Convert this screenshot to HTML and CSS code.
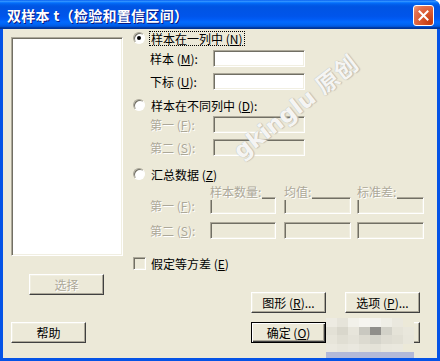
FILE: index.html
```html
<!DOCTYPE html>
<html>
<head>
    <meta charset="utf-8">
    <title>双样本 t（检验和置信区间）</title>
    <link rel="stylesheet" href="styles.css">
</head>
<body>

<div class="window">
    <!-- title bar -->
    <div class="titlebar">
        <span class="title">双样本 t（检验和置信区间）</span>
        <span class="close-btn">
            <svg width="13" height="13" viewBox="0 0 13 13"><path d="M2.5 2.5 L10.5 10.5 M10.5 2.5 L2.5 10.5" stroke="#fff" stroke-width="2" stroke-linecap="square"/></svg>
        </span>
    </div>

    <div class="client">
        <!-- left column: column list -->
        <div class="col-left">
            <div class="listbox"></div>
            <div class="btn btn-select disabled">选择</div>
            <div class="btn btn-help">帮助</div>
        </div>

        <!-- right column: options -->
        <div class="col-right">
            <div class="option-row r-one">
                <span class="radio checked"></span>
                <span class="option-text focus">样本在一列中 (<u>N</u>)</span>
            </div>
            <div class="field-row r-sample">
                <span class="field-label">样本 (<u>M</u>):</span>
                <span class="edit"></span>
            </div>
            <div class="field-row r-index">
                <span class="field-label">下标 (<u>U</u>):</span>
                <span class="edit"></span>
            </div>

            <div class="option-row r-two">
                <span class="radio"></span>
                <span class="option-text">样本在不同列中 (<u>D</u>):</span>
            </div>
            <div class="field-row r-first">
                <span class="field-label disabled">第一 (<u>F</u>):</span>
                <span class="edit off"></span>
            </div>
            <div class="field-row r-second">
                <span class="field-label disabled">第二 (<u>S</u>):</span>
                <span class="edit off"></span>
            </div>

            <div class="option-row r-three">
                <span class="radio"></span>
                <span class="option-text">汇总数据 (<u>Z</u>)</span>
            </div>
            <div class="sum-head">
                <span class="cell w66"><span class="head-text disabled">样本数量:</span></span>
                <span class="cell w67 gap8"><span class="head-text disabled">均值:</span></span>
                <span class="cell w67 gap6"><span class="head-text disabled">标准差:</span></span>
            </div>
            <div class="sum-row">
                <span class="sum-label disabled">第一 (<u>F</u>):</span>
                <span class="edit off w66"></span>
                <span class="edit off w67 gap8"></span>
                <span class="edit off w67 gap6"></span>
            </div>
            <div class="sum-row r-sum2">
                <span class="sum-label disabled">第二 (<u>S</u>):</span>
                <span class="edit off w66"></span>
                <span class="edit off w67 gap8"></span>
                <span class="edit off w67 gap6"></span>
            </div>

            <div class="option-row r-check">
                <span class="checkbox"></span>
                <span class="option-text">假定等方差 (<u>E</u>)</span>
            </div>

            <div class="btn-row r-btn1">
                <div class="btn">图形 (<u>R</u>)...</div>
                <div class="btn">选项 (<u>P</u>)...</div>
            </div>
            <div class="btn-row r-btn2">
                <div class="btn default">确定 (<u>O</u>)</div>
                <div class="btn">取消</div>
            </div>
        </div>
    </div>

    <!-- watermark and blurred patch over the dialog -->
    <div class="watermark">gkinglu 原创</div>
    <div class="mosaic">
        <span style="background:#EDEBE2"></span><span style="background:#E6E4DA"></span><span style="background:#F2F1EA"></span><span style="background:#F6F5F0"></span><span style="background:#F4F3EE"></span><span style="background:#EFEEE6"></span><span style="background:#EAE8DE"></span><span style="background:#ECE9D8"></span>
        <span style="background:#E3E1D6"></span><span style="background:#D9D7CC"></span><span style="background:#E7E5DB"></span><span style="background:#C9C8C0"></span><span style="background:#8F8E8A"></span><span style="background:#D2D1C8"></span><span style="background:#E5E3D8"></span><span style="background:#E9E7DC"></span>
        <span style="background:#E7E5DA"></span><span style="background:#E0DED3"></span><span style="background:#E4E2D8"></span><span style="background:#DCDAD0"></span><span style="background:#D5D4CB"></span><span style="background:#DEDCD2"></span><span style="background:#E1DFD4"></span><span style="background:#E8E6DB"></span>
        <span style="background:#EBE9DF"></span><span style="background:#E8E6DC"></span><span style="background:#EAE8DF"></span><span style="background:#E6E4DA"></span><span style="background:#E4E2D8"></span><span style="background:#E9E7DD"></span><span style="background:#EAE8DE"></span><span style="background:#ECE9D8"></span>
    </div>
    <div class="mosaic-strip"></div>
</div>

</body>
</html>
```

FILE: styles.css
```css
/* page */
html, body {
    margin: 0;
    height: 100%;
    background: #ffffff;
}

body {
    font-family: "Noto Sans CJK SC", "DejaVu Sans", sans-serif;
    font-size: 12px;
    color: #000000;
}

u {
    text-decoration: underline;
}

/* window frame */
.window {
    position: relative;
    width: 440px;
    height: 361px;
    display: flex;
    flex-direction: column;
    background: #0553E6;
    border-radius: 0 7px 0 0;
    overflow: hidden;
}

.titlebar {
    height: 29px;
    flex: none;
    display: flex;
    align-items: center;
    padding: 0 6px 0 7px;
    background: linear-gradient(to bottom, #0058EE 0%, #3593FF 4%, #288EFF 6%, #127DFF 8%, #036FFC 10%, #0262EE 14%, #0057E5 20%, #0054E3 24%, #0055EB 56%, #005BF5 66%, #026AFE 76%, #0062EF 86%, #0052D6 92%, #0040AB 94%, #003092 100%);
}

.title {
    flex: 1;
    color: #ffffff;
    font-weight: bold;
    font-size: 14px;
    letter-spacing: 0.3px;
    text-shadow: 1px 1px #0A1883;
    white-space: nowrap;
}

.close-btn {
    width: 19px;
    height: 19px;
    margin-top: 1px;
    border: 1px solid #ffffff;
    border-radius: 3px;
    display: flex;
    align-items: center;
    justify-content: center;
    background: radial-gradient(circle at 85% 85%, #C43A0E 0%, #DA5A30 45%, #E47050 75%, #F0A080 100%);
}

.client {
    flex: 1;
    margin: 0 3px 3px;
    background: #ECE9D8;
    display: flex;
}

/* left column */
.col-left {
    width: 130px;
    flex: none;
    padding: 8px 0 0 8px;
    box-sizing: border-box;
}

.listbox {
    width: 112px;
    height: 219px;
    box-sizing: border-box;
    background: #ffffff;
    border: 1px solid;
    border-color: #ACA899 #ffffff #ffffff #ACA899;
    box-shadow: inset 1px 1px #716F64, inset -1px -1px #F1EFE2;
}

.btn-select {
    margin: 18px 0 0 18px;
}

.btn-help {
    margin-top: 27px;
}

/* buttons */
.btn {
    width: 75px;
    height: 21px;
    box-sizing: border-box;
    display: flex;
    align-items: center;
    justify-content: center;
    border: 1px solid;
    border-color: #ffffff #404040 #404040 #ffffff;
    box-shadow: inset -1px -1px #ACA899, inset 1px 1px #F1EFE2;
    white-space: nowrap;
}

.btn.default {
    border: 1px solid #000000;
    box-shadow: inset 1px 1px #ffffff, inset -1px -1px #404040, inset -2px -2px #ACA899;
}

.disabled {
    color: #ACA899;
    text-shadow: 1px 1px #ffffff;
}

/* right column */
.col-right {
    flex: 1;
    padding-top: 2px;
    display: flex;
    flex-direction: column;
}

.option-row {
    height: 14px;
    display: flex;
    align-items: center;
}

.radio {
    width: 12px;
    height: 12px;
    box-sizing: border-box;
    border-radius: 50%;
    border: 1px solid;
    border-color: #ACA899 #ffffff #ffffff #ACA899;
    background: #ffffff;
    box-shadow: inset 1px 1px #716F64;
    margin-right: 5px;
    position: relative;
}

.radio.checked::after {
    content: "";
    position: absolute;
    left: 3px;
    top: 3px;
    width: 4px;
    height: 4px;
    border-radius: 50%;
    background: #000000;
}

.checkbox {
    width: 13px;
    height: 13px;
    box-sizing: border-box;
    border: 1px solid;
    border-color: #ACA899 #ffffff #ffffff #ACA899;
    box-shadow: inset 1px 1px #716F64, inset -1px -1px #F1EFE2;
    margin-right: 4px;
}

.option-text {
    line-height: 13px;
    padding: 0 1px;
}

.option-text.focus {
    outline: 1px dotted #000000;
}

.field-row {
    height: 17px;
    display: flex;
    align-items: center;
    padding-left: 17px;
}

.field-label {
    width: 63px;
}

.edit {
    width: 92px;
    height: 17px;
    box-sizing: border-box;
    background: #ffffff;
    border: 1px solid;
    border-color: #ACA899 #ffffff #ffffff #ACA899;
    box-shadow: inset 1px 1px #716F64, inset -1px -1px #F1EFE2;
}

.edit.off {
    background: #ECE9D8;
}

.r-sample { margin-top: 5px; }
.r-index { margin-top: 6px; }
.r-two { margin-top: 8px; }
.r-first { margin-top: 4px; }
.r-second { margin-top: 6px; }
.r-three { margin-top: 11px; }

/* summary data grid */
.sum-head {
    height: 14px;
    margin: 4px 0 -2px;
    padding-left: 77px;
    display: flex;
    position: relative;
    z-index: 1;
    line-height: 14px;
}

.head-text {
    background: #ECE9D8;
    padding-right: 1px;
}

.sum-row {
    height: 17px;
    display: flex;
    align-items: center;
    padding-left: 17px;
}

.sum-label {
    width: 60px;
}

.w66 { width: 66px; }
.w67 { width: 67px; }
.gap8 { margin-left: 8px; }
.gap6 { margin-left: 6px; }

.r-sum2 { margin-top: 8px; }

.r-check {
    margin-top: 17px;
}

.btn-row {
    display: flex;
    gap: 19px;
    padding-left: 118px;
}

.r-btn1 { margin-top: 22px; }
.r-btn2 { margin-top: 9px; }

/* overlays copied from the screenshot */
.watermark {
    position: absolute;
    left: 235px;
    top: 135px;
    transform-origin: 0 50%;
    transform: rotate(-38deg);
    font-family: "DejaVu Sans", "Noto Sans CJK SC", sans-serif;
    font-size: 23px;
    font-weight: bold;
    color: rgba(255, 255, 255, 0.9);
    text-shadow: 0 0 1px #B0AEA4, 1px 1px 1px #C8C6BC;
    white-space: nowrap;
}

.mosaic {
    position: absolute;
    left: 326px;
    top: 318px;
    width: 88px;
    height: 34px;
    display: grid;
    grid-template-columns: repeat(8, 1fr);
    grid-template-rows: repeat(4, 1fr);
}

.mosaic-strip {
    position: absolute;
    left: 326px;
    top: 352px;
    width: 88px;
    height: 6px;
    background: #B2B9D9;
}
```
